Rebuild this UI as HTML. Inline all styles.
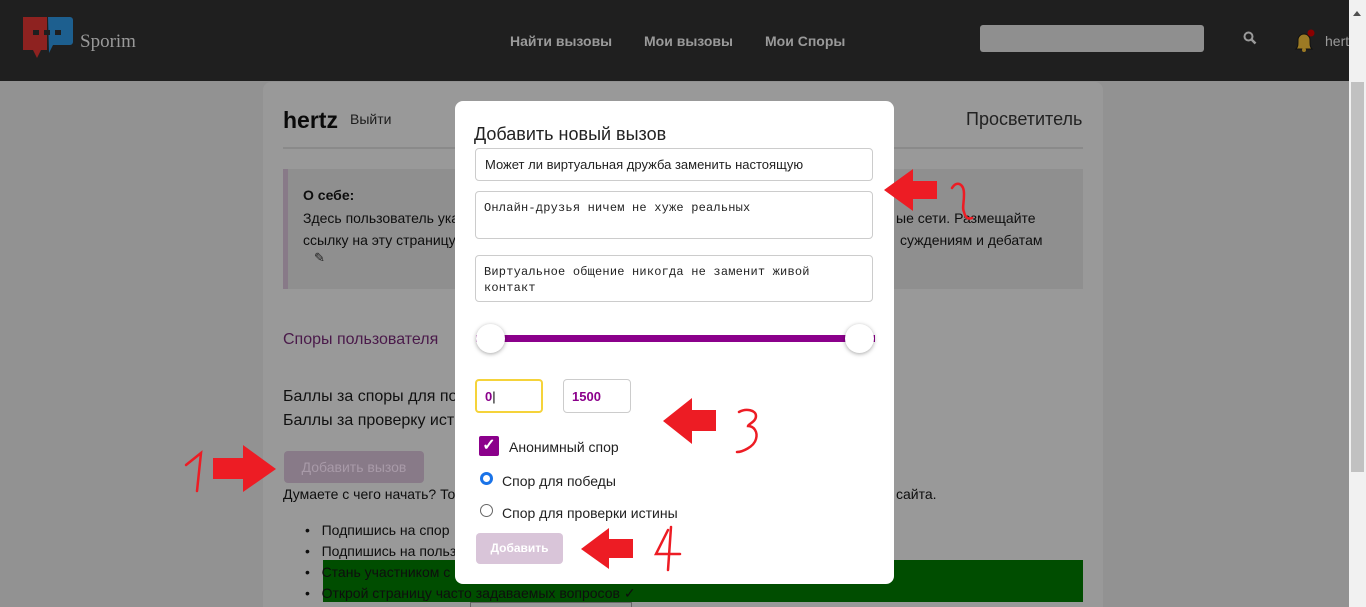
<!DOCTYPE html>
<html style="overflow:hidden"><head><meta charset="utf-8"><style>
*{box-sizing:border-box;margin:0;padding:0}
html,body{width:1366px;height:607px;overflow:hidden}
body{background:#929292;font-family:"Liberation Sans",Arial,sans-serif;position:relative}
.a{position:absolute;white-space:nowrap}
.hdr{left:0;top:0;width:1349px;height:81px;background:#1f1f1f}
.nav{color:#9a9a9a;font-weight:bold;font-size:14px;top:33px}
.card{left:263px;top:82px;width:840px;height:525px;background:#999;border-radius:8px 8px 0 0}
.t{color:#0e0e0e;font-size:14px}
.modal{left:455px;top:101px;width:439px;height:483px;background:#fff;border-radius:8px}
.inp{border:1px solid #ccc;border-radius:4px;background:#fff}
.mono{font-family:"Liberation Mono","DejaVu Sans Mono",monospace;font-size:12px;color:#222;line-height:16px;letter-spacing:.2px}
</style></head><body>
<div class="a hdr"></div>
<svg class="a" style="left:20px;top:15px" width="56" height="45" viewBox="0 0 56 45">
<path d="M3 2h24v33h-6l-4 8-4-8H3z" fill="#8e2220"/><path d="M28 2h22a3 3 0 0 1 3 3v22a3 3 0 0 1-3 3H33l-4 8z" fill="#1d5f8f"/>
<rect x="13" y="15" width="6" height="5" fill="#1f1f1f"/><rect x="24" y="15" width="6" height="5" fill="#1f1f1f"/><rect x="35" y="15" width="6" height="5" fill="#1f1f1f"/></svg>
<div class="a" style="left:80px;top:31px;color:#9a9a9a;font-family:'Liberation Serif',serif;font-size:19px">Sporim</div>
<div class="a nav" style="left:510px">Найти вызовы</div>
<div class="a nav" style="left:644px">Мои вызовы</div>
<div class="a nav" style="left:765px">Мои Споры</div>
<div class="a" style="left:980px;top:25px;width:224px;height:27px;background:#8f8f8f;border-radius:3px"></div>
<svg class="a" style="left:1243px;top:31px" width="14" height="14"><circle cx="5.5" cy="5.5" r="4" stroke="#9a9a9a" stroke-width="2" fill="none"/><path d="M8.5 8.5l4 4" stroke="#9a9a9a" stroke-width="2.5"/></svg>
<svg class="a" style="left:1292px;top:29px" width="24" height="24"><path d="M4 20c2-2 2-4 2-9a6 6 0 0 1 12 0c0 5 0 7 2 9z" fill="#9c7a24" stroke="#111"/><circle cx="12" cy="21" r="2" fill="#9c7a24"/><circle cx="19" cy="4" r="3.5" fill="#8a0000"/></svg>
<div class="a" style="left:1325px;top:33px;color:#9a9a9a;font-size:14px">hertz</div>
<div class="a" style="left:1349px;top:0;width:17px;height:607px;background:#f1f1f1"></div>
<div class="a" style="left:1351px;top:82px;width:13px;height:390px;background:#c1c1c1"></div>
<div class="a" style="left:1353px;top:7px;width:0;height:0;border:4px solid transparent;border-bottom:5px solid #505050"></div>

<div class="a card"></div>
<div class="a" style="left:283px;top:107px;font-size:23px;font-weight:bold;color:#0a0a0a">hertz</div>
<div class="a t" style="left:350px;top:111px;color:#1c1c1c">Выйти</div>
<div class="a" style="left:966px;top:109px;font-size:18px;color:#222">Просветитель</div>
<div class="a" style="left:283px;top:147px;width:800px;height:2px;background:#8a8a8a"></div>
<div class="a" style="left:283px;top:169px;width:800px;height:120px;background:#8f8f8f;border-left:5px solid #887a88"></div>
<div class="a t" style="left:303px;top:187px;font-weight:bold">О себе:</div>
<div class="a t" style="left:303px;top:207px;line-height:22px">Здесь пользователь ука<br>ссылку на эту страницу</div>
<div class="a t" style="left:896px;top:207px;line-height:22px">ые сети. Размещайте</div>
<div class="a t" style="left:900px;top:229px;line-height:22px">суждениям и дебатам</div>
<div class="a" style="left:314px;top:250px;font-size:13px;color:#222">✎</div>
<div class="a" style="left:283px;top:331px;font-size:16px;color:#4a1a4a">Споры пользователя</div>
<div class="a" style="left:283px;top:385px;font-size:16px;color:#111;line-height:24px">Баллы за споры для по<br>Баллы за проверку ист</div>
<div class="a" style="left:284px;top:451px;width:140px;height:32px;background:#887a88;border-radius:4px;color:#a89aa8;font-size:14px;text-align:center;line-height:32px">Добавить вызов</div>
<div class="a t" style="left:283px;top:486px">Думаете с чего начать? То</div>
<div class="a t" style="left:896px;top:486px">сайта.</div>
<div class="a" style="left:323px;top:560px;width:760px;height:42px;background:#004d00"></div>
<div class="a t" style="left:305px;top:520px;line-height:21px">•&nbsp;&nbsp;&nbsp;Подпишись на спор<br>•&nbsp;&nbsp;&nbsp;Подпишись на польз<br>•&nbsp;&nbsp;&nbsp;Стань участником с<br>•&nbsp;&nbsp;&nbsp;Открой страницу часто задаваемых вопросов ✓</div>
<div class="a" style="left:470px;top:602px;width:162px;height:10px;border:1px solid #666;background:#999"></div>

<div class="a modal"></div>
<div class="a" style="left:474px;top:124px;font-size:18px;color:#222">Добавить новый вызов</div>
<div class="a inp" style="left:475px;top:148px;width:398px;height:33px;font-size:13px;color:#222;padding:8px 9px">Может ли виртуальная дружба заменить настоящую</div>
<div class="a inp mono" style="left:475px;top:191px;width:398px;height:48px;padding:8px 8px">Онлайн-друзья ничем не хуже реальных</div>
<div class="a inp mono" style="left:475px;top:255px;width:398px;height:47px;padding:8px 8px">Виртуальное общение никогда не заменит живой<br>контакт</div>
<div class="a" style="left:476px;top:335px;width:399px;height:7px;background:#8b008b"></div>
<div class="a" style="left:476px;top:324px;width:29px;height:29px;border-radius:50%;background:#fff;box-shadow:0 1px 4px rgba(0,0,0,.35)"></div>
<div class="a" style="left:845px;top:324px;width:29px;height:29px;border-radius:50%;background:#fff;box-shadow:0 1px 4px rgba(0,0,0,.35)"></div>
<div class="a inp" style="left:475px;top:379px;width:68px;height:34px;border:2px solid #f5d33a;color:#8b008b;font-weight:bold;font-size:13px;padding:8px 8px">0<span style="font-weight:normal;color:#000">|</span></div>
<div class="a inp" style="left:563px;top:379px;width:68px;height:34px;color:#8b008b;font-weight:bold;font-size:13px;padding:9px 8px">1500</div>
<div class="a" style="left:479px;top:436px;width:20px;height:20px;background:#8b008b;border-radius:2px;color:#fff;font-size:16px;text-align:center;line-height:20px;font-weight:bold">✓</div>
<div class="a t" style="left:509px;top:439px;color:#222">Анонимный спор</div>
<div class="a" style="left:480px;top:472px;width:13px;height:13px;border-radius:50%;border:3.5px solid #1a73e8;background:#fff"></div>
<div class="a t" style="left:502px;top:473px;color:#222">Спор для победы</div>
<div class="a" style="left:480px;top:504px;width:13px;height:13px;border-radius:50%;border:1px solid #666;background:#fff"></div>
<div class="a t" style="left:502px;top:505px;color:#222">Спор для проверки истины</div>
<div class="a" style="left:476px;top:533px;width:87px;height:31px;background:#d9c5d9;border-radius:4px;color:#fff;font-size:12px;font-weight:bold;text-align:center;line-height:31px">Добавить</div>

<svg class="a" style="left:0;top:0" width="1366" height="607">
<g fill="#ed1c24">
<path d="M213 458h30v-13l33 24-33 23v-13h-30z"/>
<path d="M937 181h-24v-12l-29 21 29 21v-12h24z"/>
<path d="M716 410h-24v-12l-29 23 29 23v-13h24z"/>
<path d="M633 539h-24v-11l-28 21 28 20v-11h24z"/>
</g>
<g fill="none" stroke="#ed1c24" stroke-width="2.5" stroke-linecap="round">
<path d="M186 465l15-12-4 38"/>
<path d="M952 188c5-8 12-4 12 6s-2 14 0 18c1 4 3 8 8 6"/>
<path d="M739 412c7-4 17-2 17 4s-8 8-8 10c6 0 10 6 8 13-2 8-14 13-19 13"/>
<path d="M668 530l-12 24h24M671 527l-3 43"/>
</g></svg>
</body></html>
